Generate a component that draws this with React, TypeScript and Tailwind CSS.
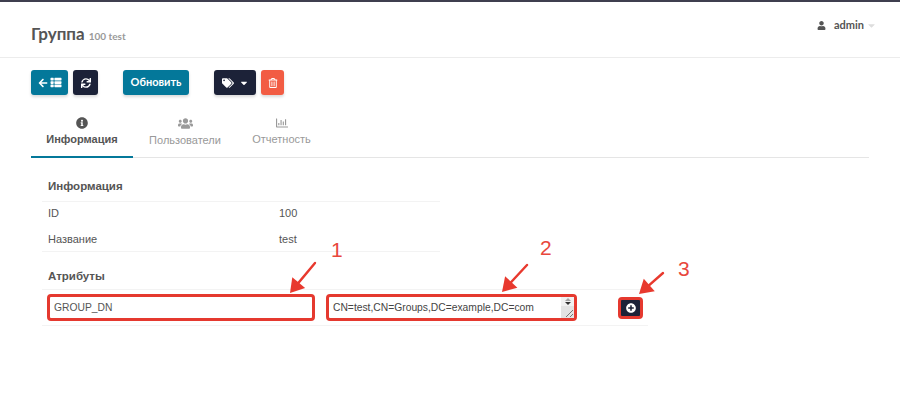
import { FaArrowLeft, FaThList, FaSync, FaTags, FaCaretDown, FaRegTrashAlt, FaInfoCircle, FaUsers, FaRegChartBar, FaUser, FaPlusCircle } from "react-icons/fa";

const rows = [
  { label: "ID", value: "100" },
  { label: "Название", value: "test" },
];

const tabs = [
  { icon: FaInfoCircle, label: "Информация", active: true, width: "w-[102px]", iconSize: "h-[12px] w-[12px]" },
  { icon: FaUsers, label: "Пользователи", active: false, width: "w-[104px]", iconSize: "h-[13px] w-[15px]" },
  { icon: FaRegChartBar, label: "Отчетность", active: false, width: "w-[89px]", iconSize: "h-[12px] w-[14px]" },
];

function Arrow({ className, x1, y1, x2, y2 }: { className: string; x1: number; y1: number; x2: number; y2: number }) {
  // arrow head is drawn in the direction of the line
  const a = Math.atan2(y2 - y1, x2 - x1);
  const len = 16;
  const spread = 0.55;
  const p1 = `${x2 - len * Math.cos(a - spread)},${y2 - len * Math.sin(a - spread)}`;
  const p2 = `${x2 - len * Math.cos(a + spread)},${y2 - len * Math.sin(a + spread)}`;
  return (
    <svg className={className} width="50" height="50" viewBox="0 0 50 50">
      <line x1={x1} y1={y1} x2={x2 - 6 * Math.cos(a)} y2={y2 - 6 * Math.sin(a)} stroke="#e8392e" strokeWidth="2.4" strokeLinecap="round" />
      <polygon points={`${x2},${y2} ${p1} ${p2}`} fill="#e8392e" />
    </svg>
  );
}

export default function App() {
  return (
    <div className="relative h-[409px] w-[900px] overflow-hidden bg-white text-[#555] font-['Liberation_Sans',sans-serif]">
      <div className="h-0.5 bg-[#3f3f4f]" />

      <header className="flex h-[56px] items-start justify-between border-b border-[#ececec] pl-[31px] pr-[23px]">
        <h1 className="mt-[20px] font-['Lato',sans-serif] text-[17px] font-bold leading-[24px] text-[#555]">
          Группа <small className="text-[10px] font-bold text-[#999]">100 test</small>
        </h1>
        <div className="mt-[15px] flex items-center font-['Lato',sans-serif] text-[11px] font-bold text-[#555]">
          <FaUser className="mr-[8px] h-[9px] w-[9px]" />
          admin
          <FaCaretDown className="ml-[2px] h-[11px] w-[11px] text-[#ddd]" />
        </div>
      </header>

      <div className="mt-3 flex pl-[31px] font-['Lato',sans-serif]">
        <button className="flex h-[25px] w-[37px] items-center justify-center gap-[2px] rounded-[3px] bg-[#04789a] text-white shadow-[0_2px_3px_rgba(0,0,0,0.15)]">
          <FaArrowLeft className="h-[10px] w-[10px]" />
          <FaThList className="h-[11px] w-[12px]" />
        </button>
        <button className="ml-[5px] flex h-[25px] w-[25px] items-center justify-center rounded-[3px] bg-[#1c2238] text-white shadow-[0_2px_3px_rgba(0,0,0,0.15)]">
          <FaSync className="h-[10px] w-[10px]" />
        </button>
        <button className="ml-[25px] h-[25px] w-[66px] rounded-[3px] bg-[#04789a] text-[11px] font-bold text-white shadow-[0_2px_3px_rgba(0,0,0,0.15)]">
          Обновить
        </button>
        <button className="ml-[25px] flex h-[25px] w-[42px] items-center justify-center gap-[5px] rounded-[3px] bg-[#1c2238] text-white shadow-[0_2px_3px_rgba(0,0,0,0.15)]">
          <FaTags className="h-[12px] w-[12px]" />
          <FaCaretDown className="h-[10px] w-[10px]" />
        </button>
        <button className="ml-[5px] flex h-[25px] w-[23px] items-center justify-center rounded-[3px] bg-[#f25c43] text-white shadow-[0_2px_3px_rgba(0,0,0,0.15)]">
          <FaRegTrashAlt className="h-[10px] w-[10px]" />
        </button>
      </div>

      <div className="ml-[31px] mr-[31px] mt-[20px] flex h-[43px] border-b border-[#e5e5e5]">
        {tabs.map(({ icon: Icon, label, active, width, iconSize }) => (
          <div
            key={label}
            className={`flex h-[43px] flex-col items-center pt-[2px] text-[11px] ${width} ${active ? "border-b-2 border-[#04789a] font-bold text-[#555]" : "text-[#999]"}`}
          >
            <Icon className={`${iconSize} ${active ? "text-[#555]" : "text-[#999]"}`} />
            <span className="mt-[2px] leading-[16px]">{label}</span>
          </div>
        ))}
      </div>

      <section className="ml-[42px] mt-[19px] w-[398px] text-[11px]">
        <h2 className="h-[25px] border-b border-[#f3f3f3] pl-[6px] text-[11.5px] font-bold leading-[18px]">Информация</h2>
        <div className="h-[50px] border-b border-[#f3f3f3]">
          {rows.map((r) => (
            <div key={r.label} className="grid h-[26px] grid-cols-[231px_1fr] pl-[6px] pt-[3px] leading-[16px]">
              <span>{r.label}</span>
              <span>{r.value}</span>
            </div>
          ))}
        </div>
      </section>

      <section className="ml-[42px] mt-[14px] w-[606px] text-[10.3px]">
        <h2 className="h-[24px] border-b border-[#f3f3f3] pl-[6px] text-[11.5px] font-bold leading-[20px]">Атрибуты</h2>
        <div className="flex h-[36px] items-center border-b border-[#f3f3f3] pl-[5px]">
          <div className="flex h-[27px] w-[268px] items-center rounded-[4px] border-[3px] border-[#e5392f] pl-[4px]">GROUP_DN</div>
          <div className="relative ml-[11px] flex h-[27px] w-[251px] items-center rounded-[4px] border-[3px] border-[#e5392f] pl-[4px] text-[#444]">
            CN=test,CN=Groups,DC=example,DC=com
            <div className="absolute right-0 top-0 flex h-full w-[13px] flex-col items-center justify-end bg-[#e3e3e3]">
              <div className="absolute top-0 flex h-[9px] w-full flex-col items-center justify-center gap-[1px] bg-[#f1f1f1]">
                <span className="h-0 w-0 border-x-[3px] border-b-[3px] border-x-transparent border-b-[#a3a3a3]" />
                <span className="h-0 w-0 border-x-[3px] border-t-[3px] border-x-transparent border-t-[#333]" />
              </div>
              <svg width="9" height="9" viewBox="0 0 9 9" className="absolute bottom-0 right-0">
                <path d="M1 8 L8 1 M5 8 L8 5" stroke="#777" strokeWidth="1" />
              </svg>
            </div>
          </div>
          <button className="ml-[41px] flex h-[22px] w-[25px] items-center justify-center rounded-[4px] border-[3px] border-[#e5392f] bg-[#1c2238] text-white">
            <FaPlusCircle className="h-[10px] w-[10px]" />
          </button>
        </div>
      </section>

      <span className="absolute left-[331px] top-[236px] text-[21px] leading-[28px] text-[#e8473c]">1</span>
      <span className="absolute left-[540px] top-[234px] text-[21px] leading-[28px] text-[#e8473c]">2</span>
      <span className="absolute left-[678px] top-[255px] text-[21px] leading-[28px] text-[#e8473c]">3</span>

      <Arrow className="absolute left-[280px] top-[256px]" x1={35} y1={7} x2={10} y2={37} />
      <Arrow className="absolute left-[495px] top-[256px]" x1={32} y1={9} x2={7} y2={36} />
      <Arrow className="absolute left-[632px] top-[265px]" x1={31} y1={8} x2={7} y2={29} />
    </div>
  );
}
